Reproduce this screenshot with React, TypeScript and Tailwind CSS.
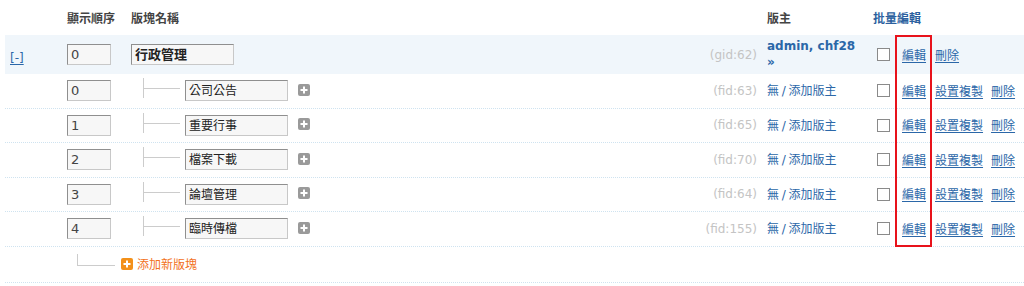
import React from 'react';

const cjk = { fontFamily: '"Noto Sans CJK TC", "Noto Sans", sans-serif' };
const latin = { fontFamily: '"DejaVu Sans", "Noto Sans CJK TC", sans-serif' };

interface Forum {
  order: string;
  name: string;
  fid: number;
}

const forums: Forum[] = [
  { order: '0', name: '公司公告', fid: 63 },
  { order: '1', name: '重要行事', fid: 65 },
  { order: '2', name: '檔案下載', fid: 70 },
  { order: '3', name: '論壇管理', fid: 64 },
  { order: '4', name: '臨時傳檔', fid: 155 },
];

const PlusBox: React.FC<{ color: string }> = ({ color }) => (
  <svg width="12" height="12" viewBox="0 0 12 12" className="shrink-0">
    <rect x="0" y="0" width="12" height="12" rx="2" fill={color} />
    <rect x="2.5" y="5" width="7" height="2" fill="#fff" />
    <rect x="5" y="2.5" width="2" height="7" fill="#fff" />
  </svg>
);

const OrderInput: React.FC<{ value: string }> = ({ value }) => (
  <div
    className="w-[44px] h-[21px] border border-[#c8c8c8] border-t-[#8f8f8f] border-l-[#8f8f8f] bg-[#f7f7f7] pl-[3px] text-[13px] leading-[19px] text-[#444]"
    style={latin}
  >
    {value}
  </div>
);

const Checkbox: React.FC = () => (
  <div className="w-[13px] h-[13px] border border-[#8a8a8a] bg-white shrink-0" />
);

const Link: React.FC<{ children: React.ReactNode; className?: string }> = ({ children, className }) => (
  <span className={`text-[#2b67a8] underline underline-offset-2 text-[12px] ${className ?? ''}`} style={cjk}>
    {children}
  </span>
);

export default function App() {
  return (
    <div className="w-[1024px] h-[286px] bg-white overflow-hidden relative" style={cjk}>
      <div className="ml-[5px] w-[1019px]">
        {/* header */}
        <div className="flex items-center h-[35px] text-[12px] font-bold text-[#444]">
          <div className="w-[62px]" />
          <div className="w-[64px]">顯示順序</div>
          <div className="flex-1">版塊名稱</div>
          <div className="w-[105px]">版主</div>
          <div className="w-[152px] pl-[1px] text-[#2b5f9e]">批量編輯</div>
        </div>

        {/* group row */}
        <div className="flex items-center h-[39px] bg-[#f0f6fb]">
          <div className="w-[62px] pl-[5px]">
            <span className="text-[#2b67a8] underline underline-offset-2 text-[12px]" style={latin}>[-]</span>
          </div>
          <div className="w-[64px]">
            <OrderInput value="0" />
          </div>
          <div className="flex-1 flex items-center pr-[10px]">
            <div className="w-[103px] h-[21px] border border-[#c8c8c8] border-t-[#8f8f8f] border-l-[#8f8f8f] bg-[#f7f7f7] pl-[3px] text-[13px] leading-[18px] font-bold text-[#222]">
              行政管理
            </div>
            <div className="ml-auto text-[12px] text-[#c4c4c4]" style={latin}>(gid:62)</div>
          </div>
          <div className="w-[105px] text-[12px] font-bold text-[#2b67a8] leading-[16px] -mt-[2px]" style={latin}>
            <div>admin, chf28</div>
            <div>»</div>
          </div>
          <div className="w-[152px] flex items-center pl-[5px]">
            <Checkbox />
            <Link className="ml-[12px]">編輯</Link>
            <Link className="ml-[9px]">刪除</Link>
          </div>
        </div>

        {/* forum rows */}
        {forums.map((f) => (
          <div key={f.fid} className="flex items-center h-[34.5px] border-b border-dotted border-[#cfe3f0]">
            <div className="w-[62px]" />
            <div className="w-[64px]">
              <OrderInput value={f.order} />
            </div>
            <div className="flex-1 flex items-center pr-[10px]">
              <div className="w-[12px]" />
              <div className="relative w-[42px] h-[21px] shrink-0">
                <div className="absolute left-0 top-[-2px] h-[20px] w-px bg-[#cccccc]" />
                <div className="absolute left-0 top-[8px] w-[37px] h-px bg-[#cccccc]" />
              </div>
              <div className="w-[103px] h-[21px] border border-[#c8c8c8] border-t-[#8f8f8f] border-l-[#8f8f8f] bg-[#f7f7f7] pl-[3px] text-[12px] leading-[18px] text-[#222]">
                {f.name}
              </div>
              <div className="ml-[10px] -mt-[2px]">
                <PlusBox color="#9a9a9a" />
              </div>
              <div className="ml-auto text-[12px] text-[#c4c4c4]" style={latin}>(fid:{f.fid})</div>
            </div>
            <div className="w-[105px] text-[12px] text-[#2b67a8]">
              無 <span style={latin}>/</span> 添加版主
            </div>
            <div className="w-[152px] flex items-center pl-[5px]">
              <Checkbox />
              <Link className="ml-[12px]">編輯</Link>
              <Link className="ml-[9px]">設置複製</Link>
              <Link className="ml-[8px]">刪除</Link>
            </div>
          </div>
        ))}

        {/* add forum */}
        <div className="flex items-center h-[36px] border-b border-dotted border-[#cfe3f0]">
          <div className="w-[72px]" />
          <div className="w-[38px] h-[12px] -mt-[8px] border-l border-b border-[#cccccc]" />
          <div className="ml-[6px] flex items-center gap-[4px]">
            <PlusBox color="#f39019" />
            <span className="text-[12px] text-[#f2711c]">添加新版塊</span>
          </div>
        </div>
      </div>

      {/* highlight annotation */}
      <div className="absolute left-[895px] top-[35px] w-[37px] h-[212px] border-2 border-[#e8121b]" />
    </div>
  );
}
